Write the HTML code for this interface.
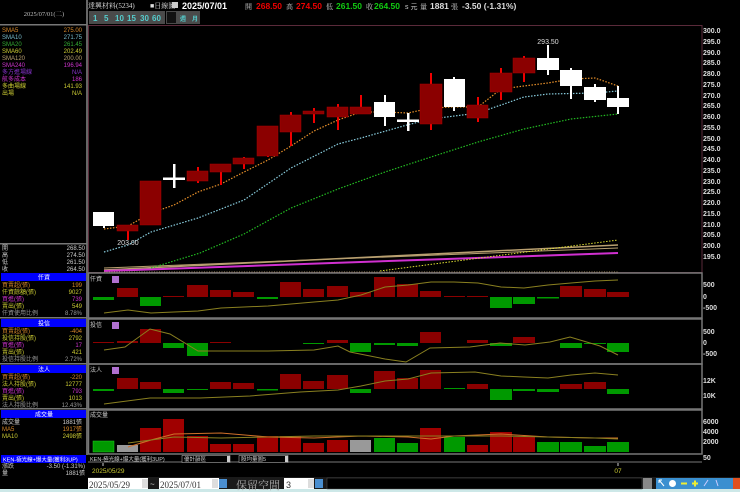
<!DOCTYPE html>
<html><head><meta charset="utf-8"><style>
html,body{margin:0;padding:0;background:#000;width:740px;height:492px;overflow:hidden}
svg{display:block}
text{font-family:"Liberation Sans","Noto Sans CJK TC",sans-serif}
.s{font-family:"Liberation Serif","Noto Serif CJK SC",serif}
</style></head><body>
<svg width="740" height="492" viewBox="0 0 740 492" xmlns="http://www.w3.org/2000/svg">
<rect width="740" height="492" fill="#000"/>
<text x="88" y="8" font-size="7" fill="#ddd" class="s">達興材料(5234)</text>
<text x="150" y="8" font-size="7" fill="#ddd" class="s">■日線圖</text>
<rect x="172" y="2" width="6" height="6" fill="#ccc"/>
<text x="182" y="9" font-size="9" font-weight="bold" fill="#fff">2025/07/01</text>
<text x="245" y="9" font-size="7" fill="#ccc" class="s">開</text><text x="256" y="9" font-size="8.5" font-weight="bold" fill="#e00">268.50</text>
<text x="286" y="9" font-size="7" fill="#ccc" class="s">高</text><text x="296" y="9" font-size="8.5" font-weight="bold" fill="#e00">274.50</text>
<text x="326" y="9" font-size="7" fill="#ccc" class="s">低</text><text x="336" y="9" font-size="8.5" font-weight="bold" fill="#1c1">261.50</text>
<text x="366" y="9" font-size="7" fill="#ccc" class="s">收</text><text x="374" y="9" font-size="8.5" font-weight="bold" fill="#1c1">264.50</text>
<text x="405" y="9" font-size="7" fill="#ccc">s 元</text>
<text x="420" y="9" font-size="7" fill="#ccc" class="s">量</text><text x="430" y="9" font-size="8.5" font-weight="bold" fill="#ddd">1881</text>
<text x="451" y="9" font-size="7" fill="#ccc" class="s">張</text>
<text x="462" y="9" font-size="8.5" font-weight="bold" fill="#ddd">-3.50 (-1.31%)</text>
<g font-size="8" font-weight="bold" fill="#5cc">
<rect x="89" y="11" width="76" height="13" fill="#4a4a4a"/>
<rect x="166" y="11" width="34" height="13" fill="#4a4a4a"/>
<rect x="167" y="12" width="9" height="11" fill="#111"/>
<text x="93" y="21">1</text><text x="104" y="21">5</text><text x="115" y="21">10</text><text x="127" y="21">15</text><text x="140" y="21">30</text><text x="152" y="21">60</text>
<text x="180" y="21" font-size="6">週</text><text x="192" y="21" font-size="6">月</text>
</g>
<rect x="0" y="0" width="87" height="492" fill="#000"/>
<rect x="86" y="0" width="2" height="455" fill="#666"/>
<rect x="0" y="24" width="87" height="1.5" fill="#777"/>
<text x="44" y="16" font-size="6.5" fill="#bbb" text-anchor="middle" class="s">2025/07/01(二)</text>
<g font-size="6" class="s">
<text x="2" y="32" fill="#d8892a">SMA5</text><text x="82" y="32" fill="#d8892a" text-anchor="end">275.00</text>
<text x="2" y="39" fill="#7bc">SMA10</text><text x="82" y="39" fill="#7bc" text-anchor="end">271.75</text>
<text x="2" y="46" fill="#3a3">SMA20</text><text x="82" y="46" fill="#3a3" text-anchor="end">261.45</text>
<text x="2" y="53" fill="#cc3">SMA60</text><text x="82" y="53" fill="#cc3" text-anchor="end">202.49</text>
<text x="2" y="60" fill="#b9a070">SMA120</text><text x="82" y="60" fill="#b9a070" text-anchor="end">200.00</text>
<text x="2" y="67" fill="#c3c">SMA240</text><text x="82" y="67" fill="#c3c" text-anchor="end">196.94</text>
<text x="2" y="74" fill="#83c">多方進場線</text><text x="82" y="74" fill="#83c" text-anchor="end">N/A</text>
<text x="2" y="81" fill="#c3c">航多成本</text><text x="82" y="81" fill="#c3c" text-anchor="end">186</text>
<text x="2" y="88" fill="#cc3">多曲場線</text><text x="82" y="88" fill="#cc3" text-anchor="end">141.93</text>
<text x="2" y="95" fill="#cc3">出場</text><text x="82" y="95" fill="#cc3" text-anchor="end">N/A</text>
</g>
<rect x="0" y="243" width="87" height="1.5" fill="#777"/>
<g font-size="6" fill="#ccc" class="s">
<text x="2" y="250">開</text><text x="85" y="250" text-anchor="end">268.50</text>
<text x="2" y="257">高</text><text x="85" y="257" text-anchor="end">274.50</text>
<text x="2" y="264">低</text><text x="85" y="264" text-anchor="end">261.50</text>
<text x="2" y="271">收</text><text x="85" y="271" text-anchor="end">264.50</text>
</g>
<g font-size="6" class="s">
<rect x="1" y="273" width="85" height="8" fill="#00f"/><text x="44" y="279.5" fill="#fff" text-anchor="middle">仟資</text>
<text x="2" y="287" fill="#d8892a">買賣超(張)</text><text x="82" y="287" fill="#d8892a" text-anchor="end">199</text>
<text x="2" y="294" fill="#cc3">仟資餘額(張)</text><text x="82" y="294" fill="#cc3" text-anchor="end">9027</text>
<text x="2" y="301" fill="#c3c">買進(張)</text><text x="82" y="301" fill="#c3c" text-anchor="end">739</text>
<text x="2" y="308" fill="#cc3">賣出(張)</text><text x="82" y="308" fill="#cc3" text-anchor="end">549</text>
<text x="2" y="315" fill="#999">仟資使用比例</text><text x="82" y="315" fill="#999" text-anchor="end">8.78%</text>
<rect x="0" y="317" width="87" height="1.5" fill="#777"/>
<rect x="1" y="319" width="85" height="8" fill="#00f"/><text x="44" y="325.5" fill="#fff" text-anchor="middle">投信</text>
<text x="2" y="333" fill="#d8892a">買賣超(張)</text><text x="82" y="333" fill="#d8892a" text-anchor="end">-404</text>
<text x="2" y="340" fill="#cc3">投信持股(張)</text><text x="82" y="340" fill="#cc3" text-anchor="end">2792</text>
<text x="2" y="347" fill="#c3c">買進(張)</text><text x="82" y="347" fill="#c3c" text-anchor="end">17</text>
<text x="2" y="354" fill="#cc3">賣出(張)</text><text x="82" y="354" fill="#cc3" text-anchor="end">421</text>
<text x="2" y="361" fill="#999">投信持股比例</text><text x="82" y="361" fill="#999" text-anchor="end">2.72%</text>
<rect x="0" y="363" width="87" height="1.5" fill="#777"/>
<rect x="1" y="365" width="85" height="8" fill="#00f"/><text x="44" y="371.5" fill="#fff" text-anchor="middle">法人</text>
<text x="2" y="379" fill="#d8892a">買賣超(張)</text><text x="82" y="379" fill="#d8892a" text-anchor="end">-220</text>
<text x="2" y="386" fill="#cc3">法人持股(張)</text><text x="82" y="386" fill="#cc3" text-anchor="end">12777</text>
<text x="2" y="393" fill="#c3c">買進(張)</text><text x="82" y="393" fill="#c3c" text-anchor="end">793</text>
<text x="2" y="400" fill="#cc3">賣出(張)</text><text x="82" y="400" fill="#cc3" text-anchor="end">1013</text>
<text x="2" y="407" fill="#999">法人持股比例</text><text x="82" y="407" fill="#999" text-anchor="end">12.43%</text>
<rect x="0" y="408" width="87" height="1.5" fill="#777"/>
<rect x="1" y="410" width="85" height="8" fill="#00f"/><text x="44" y="416.5" fill="#fff" text-anchor="middle">成交量</text>
<text x="2" y="424" fill="#ccc">成交量</text><text x="82" y="424" fill="#ccc" text-anchor="end">1881張</text>
<text x="2" y="431" fill="#d8892a">MA5</text><text x="82" y="431" fill="#d8892a" text-anchor="end">1917張</text>
<text x="2" y="438" fill="#cc3">MA10</text><text x="82" y="438" fill="#cc3" text-anchor="end">2498張</text>
<rect x="1" y="455" width="85" height="8" fill="#00f"/><text x="3" y="461.5" fill="#fff" font-size="5.5">KEN-極光線+爆大量(獲利3UP)</text>
<text x="2" y="468" fill="#ccc">漲跌</text><text x="85" y="468" fill="#ccc" text-anchor="end">-3.50 (-1.31%)</text>
<text x="2" y="475" fill="#ccc">量</text><text x="85" y="475" fill="#ccc" text-anchor="end">1881張</text>
</g>
<rect x="88.5" y="25.5" width="613.5" height="247" fill="none" stroke="#5a2a3a"/>
<g font-size="7" font-weight="bold" fill="#ddd">
<text x="703" y="33">300.0</text><text x="703" y="44">295.0</text><text x="703" y="55">290.0</text><text x="703" y="65">285.0</text><text x="703" y="76">280.0</text><text x="703" y="87">275.0</text><text x="703" y="98">270.0</text><text x="703" y="108">265.0</text><text x="703" y="119">260.0</text><text x="703" y="130">255.0</text><text x="703" y="141">250.0</text><text x="703" y="151">245.0</text><text x="703" y="162">240.0</text><text x="703" y="173">235.0</text><text x="703" y="184">230.0</text><text x="703" y="194">225.0</text><text x="703" y="205">220.0</text><text x="703" y="216">215.0</text><text x="703" y="227">210.0</text><text x="703" y="237">205.0</text><text x="703" y="248">200.0</text><text x="703" y="259">195.0</text>
</g>
<polyline points="104,270 618,245" fill="none" stroke="#b9a070" stroke-width="1.5"/>
<polyline points="104,268 618,248" fill="none" stroke="#b9a070" stroke-width="1"/>
<polyline points="104,271 618,253" fill="none" stroke="#d030d0" stroke-width="2"/>
<polyline points="380,271 618,240" fill="none" stroke="#dd3" stroke-width="1" stroke-dasharray="1.5 1.5"/>
<line x1="104" y1="272" x2="618" y2="272" stroke="#aa9060" stroke-dasharray="1 1.5"/>
<polyline points="151,268 200,253 244,234 291,208 338,189 385,172 431,157 478,142 524,129 571,119 618,114" fill="none" stroke="#2b2" stroke-width="1.2" stroke-dasharray="1.5 1.5"/>
<polyline points="104,252 128,245 151,232 198,218 244,200 291,168 338,144 361,138 407,125 431,119 478,113 524,97 548,94 595,93 618,91" fill="none" stroke="#8cd" stroke-width="1.2" stroke-dasharray="1.5 1.5"/>
<polyline points="104,229 128,226 151,213 174,205 198,192 221,184 244,172 268,160 291,146 314,131 338,120 361,112 385,112 408,113 431,108 454,107 478,107 501,89 524,86 548,83 571,79 595,78 618,86" fill="none" stroke="#e8902a" stroke-width="1.2" stroke-dasharray="1.5 1.5"/>
<g>
<g fill="#f00000">
<rect x="127" y="225" width="2" height="15"/><rect x="150" y="181" width="2" height="44"/>
<rect x="197" y="167" width="2" height="16"/><rect x="220" y="164" width="2" height="21"/>
<rect x="243" y="157" width="2" height="12"/><rect x="267" y="126" width="2" height="31"/>
<rect x="290" y="112" width="2" height="34"/><rect x="313" y="108" width="2" height="15"/>
<rect x="337" y="104" width="2" height="26"/><rect x="360" y="95" width="2" height="19"/>
<rect x="430" y="73" width="2" height="57"/><rect x="477" y="97" width="2" height="25"/>
<rect x="500" y="68" width="2" height="32"/><rect x="523" y="56" width="2" height="26"/>
</g>
<g fill="#8b0000" stroke="#a00" stroke-width="0.5">
<rect x="117" y="225" width="21" height="6"/><rect x="140" y="181" width="21" height="44"/>
<rect x="187" y="171" width="21" height="10"/><rect x="210" y="164" width="21" height="8"/>
<rect x="233" y="158" width="21" height="6"/><rect x="257" y="126" width="21" height="30"/>
<rect x="280" y="115" width="21" height="17"/><rect x="303" y="111" width="21" height="3"/>
<rect x="327" y="107" width="21" height="10"/><rect x="350" y="107" width="21" height="7"/>
<rect x="420" y="84" width="22" height="40"/><rect x="467" y="105" width="21" height="13"/>
<rect x="490" y="73" width="22" height="19"/><rect x="513" y="58" width="22" height="15"/>
</g>
<g fill="#fff">
<rect x="103" y="212" width="2" height="16"/><rect x="93" y="212" width="21" height="14"/>
<rect x="173" y="164" width="2.5" height="24"/><rect x="163" y="177.5" width="22" height="2.5"/>
<rect x="384" y="95" width="2" height="31"/><rect x="374" y="102" width="21" height="15"/>
<rect x="407" y="113" width="2.5" height="18"/><rect x="397" y="119.5" width="22" height="2.5"/>
<rect x="453" y="77" width="2" height="34"/><rect x="444" y="79" width="21" height="28"/>
<rect x="547" y="45" width="2" height="30"/><rect x="537" y="58" width="22" height="12"/>
<rect x="570" y="68" width="2" height="31"/><rect x="560" y="70" width="22" height="16"/>
<rect x="594" y="84" width="2" height="18"/><rect x="584" y="87" width="22" height="13"/>
<rect x="617" y="86" width="2" height="28"/><rect x="607" y="98" width="22" height="9"/>
</g>
</g>
<text x="548" y="44" font-size="7" fill="#ddd" text-anchor="middle">293.50</text>
<text x="128" y="245" font-size="7" fill="#ddd" text-anchor="middle">203.00</text>
<g fill="none" stroke="#777" stroke-width="1.5">
<rect x="88.5" y="273" width="613.5" height="45"/>
<rect x="88.5" y="319" width="613.5" height="45"/>
<rect x="88.5" y="364" width="613.5" height="45"/>
<rect x="88.5" y="410" width="613.5" height="44"/>
</g>
<line x1="88" y1="462" x2="702" y2="462" stroke="#777"/>
<g font-size="6" fill="#ccc" class="s">
<text x="90" y="281">仟資</text><text x="90" y="327">投信</text><text x="90" y="372">法人</text><text x="90" y="417">成交量</text>
</g>
<g fill="#b070d0"><rect x="112" y="276" width="7" height="7"/><rect x="112" y="322" width="7" height="7"/><rect x="112" y="367" width="7" height="7"/></g>
<g font-size="7" font-weight="bold" fill="#ddd">
<text x="703" y="287">500</text><text x="703" y="299">0</text><text x="703" y="310">-500</text>
<text x="703" y="334">500</text><text x="703" y="345">0</text><text x="703" y="356">-500</text>
<text x="703" y="383">12K</text><text x="703" y="398">10K</text>
<text x="703" y="424">6000</text><text x="703" y="434">4000</text><text x="703" y="444">2000</text><text x="703" y="460">50</text>
</g>
<g>
<rect x="93" y="297" width="21" height="3" fill="#090"/>
<rect x="117" y="288" width="21" height="9" fill="#8b0000"/>
<rect x="140" y="297" width="21" height="9" fill="#090"/>
<rect x="163" y="296" width="21" height="1" fill="#8b0000"/>
<rect x="187" y="285" width="21" height="12" fill="#8b0000"/>
<rect x="210" y="290" width="21" height="7" fill="#8b0000"/>
<rect x="233" y="292" width="21" height="5" fill="#8b0000"/>
<rect x="257" y="297" width="21" height="2" fill="#090"/>
<rect x="280" y="282" width="21" height="15" fill="#8b0000"/>
<rect x="303" y="289" width="21" height="8" fill="#8b0000"/>
<rect x="327" y="286" width="21" height="11" fill="#8b0000"/>
<rect x="350" y="292" width="21" height="5" fill="#8b0000"/>
<rect x="374" y="277" width="21" height="20" fill="#8b0000"/>
<rect x="397" y="284" width="21" height="13" fill="#8b0000"/>
<rect x="420" y="291" width="21" height="6" fill="#8b0000"/>
<rect x="444" y="296" width="21" height="1" fill="#8b0000"/>
<rect x="467" y="296" width="21" height="1" fill="#8b0000"/>
<rect x="490" y="297" width="22" height="11" fill="#090"/>
<rect x="513" y="297" width="22" height="7" fill="#090"/>
<rect x="537" y="297" width="22" height="1.5" fill="#090"/>
<rect x="560" y="286" width="22" height="11" fill="#8b0000"/>
<rect x="584" y="289" width="22" height="8" fill="#8b0000"/>
<rect x="607" y="292" width="22" height="5" fill="#8b0000"/>
</g>
<polyline points="104,313 128,310 151,313 174,312 198,311 221,308 244,307 268,306 291,304 314,302 338,300 361,295 385,287 408,285 431,282 454,282 478,283 501,287 524,288 548,285 571,283 595,281 618,280" fill="none" stroke="#8a8020" stroke-width="1"/>
<g>
<rect x="93" y="342" width="21" height="1" fill="#8b0000"/>
<rect x="117" y="341" width="21" height="2" fill="#8b0000"/>
<rect x="140" y="329" width="21" height="14" fill="#8b0000"/>
<rect x="163" y="343" width="21" height="5" fill="#090"/>
<rect x="187" y="343" width="21" height="13" fill="#090"/>
<rect x="210" y="342" width="21" height="1" fill="#8b0000"/>
<rect x="303" y="343" width="21" height="1" fill="#090"/>
<rect x="327" y="340" width="21" height="3" fill="#8b0000"/>
<rect x="350" y="343" width="21" height="9" fill="#090"/>
<rect x="374" y="343" width="21" height="2" fill="#090"/>
<rect x="397" y="343" width="21" height="3" fill="#090"/>
<rect x="420" y="332" width="21" height="11" fill="#8b0000"/>
<rect x="467" y="340" width="21" height="3" fill="#8b0000"/>
<rect x="490" y="343" width="22" height="3" fill="#090"/>
<rect x="513" y="337" width="22" height="6" fill="#8b0000"/>
<rect x="560" y="343" width="22" height="5" fill="#090"/>
<rect x="584" y="343" width="22" height="1" fill="#090"/>
<rect x="607" y="343" width="22" height="9" fill="#090"/>
</g>
<polyline points="104,350 125,347 150,329 170,334 198,351 221,351 268,351 314,350 338,346 350,352 385,359 406,362 430,348 470,347 500,343 525,345 550,342 570,337 600,346 618,355" fill="none" stroke="#8a8020" stroke-width="1"/>
<g>
<rect x="93" y="389" width="21" height="2" fill="#090"/>
<rect x="117" y="378" width="21" height="11" fill="#8b0000"/>
<rect x="140" y="382" width="21" height="7" fill="#8b0000"/>
<rect x="163" y="389" width="21" height="4" fill="#090"/>
<rect x="187" y="389" width="21" height="1" fill="#090"/>
<rect x="210" y="382" width="21" height="7" fill="#8b0000"/>
<rect x="233" y="383" width="21" height="6" fill="#8b0000"/>
<rect x="257" y="389" width="21" height="1.5" fill="#090"/>
<rect x="280" y="374" width="21" height="15" fill="#8b0000"/>
<rect x="303" y="381" width="21" height="8" fill="#8b0000"/>
<rect x="327" y="375" width="21" height="14" fill="#8b0000"/>
<rect x="350" y="389" width="21" height="4" fill="#090"/>
<rect x="374" y="371" width="21" height="18" fill="#8b0000"/>
<rect x="397" y="378" width="21" height="11" fill="#8b0000"/>
<rect x="420" y="370" width="21" height="19" fill="#8b0000"/>
<rect x="444" y="388" width="21" height="1" fill="#090"/>
<rect x="467" y="384" width="21" height="5" fill="#8b0000"/>
<rect x="490" y="389" width="22" height="11" fill="#090"/>
<rect x="513" y="389" width="22" height="2" fill="#090"/>
<rect x="537" y="389" width="22" height="3" fill="#090"/>
<rect x="560" y="384" width="22" height="5" fill="#8b0000"/>
<rect x="584" y="382" width="22" height="7" fill="#8b0000"/>
<rect x="607" y="389" width="22" height="5" fill="#090"/>
</g>
<polyline points="104,404 150,398 200,398 250,396 300,392 338,390 361,386 385,381 408,379 431,373 475,372 501,376 524,377 548,378 571,375 595,373 618,375" fill="none" stroke="#8a8020" stroke-width="1"/>
<g>
<rect x="93" y="441" width="21" height="11" fill="#090" stroke="#2c2" stroke-width="0.5"/>
<rect x="117" y="445" width="21" height="7" fill="#999"/>
<rect x="140" y="428" width="21" height="24" fill="#a00000"/>
<rect x="163" y="419" width="21" height="33" fill="#a00000"/>
<rect x="187" y="436" width="21" height="16" fill="#a00000"/>
<rect x="210" y="444" width="21" height="8" fill="#a00000"/>
<rect x="233" y="444" width="21" height="8" fill="#a00000"/>
<rect x="257" y="436" width="21" height="16" fill="#a00000"/>
<rect x="280" y="436" width="21" height="16" fill="#a00000"/>
<rect x="303" y="443" width="21" height="9" fill="#a00000"/>
<rect x="327" y="440" width="21" height="12" fill="#a00000"/>
<rect x="350" y="440" width="21" height="12" fill="#999"/>
<rect x="374" y="438" width="21" height="14" fill="#090"/>
<rect x="397" y="443" width="21" height="9" fill="#090"/>
<rect x="420" y="428" width="21" height="24" fill="#a00000"/>
<rect x="444" y="437" width="21" height="15" fill="#090"/>
<rect x="467" y="445" width="21" height="7" fill="#a00000"/>
<rect x="490" y="432" width="22" height="20" fill="#a00000"/>
<rect x="513" y="437" width="22" height="15" fill="#a00000"/>
<rect x="537" y="442" width="22" height="10" fill="#090"/>
<rect x="560" y="442" width="22" height="10" fill="#090"/>
<rect x="584" y="446" width="22" height="6" fill="#090"/>
<rect x="607" y="442" width="22" height="10" fill="#090"/>
</g>
<polyline points="128,447 151,440 174,434 221,433 268,437 314,438 361,436 408,437 431,439 454,436 501,434 548,437 595,438 618,438" fill="none" stroke="#d0702a" stroke-width="1"/>
<polyline points="128,443 174,437 221,438 268,437 314,436 361,436 408,436 454,436 501,436 548,437 595,438 618,439" fill="none" stroke="#8a8020" stroke-width="1"/>
<g font-size="5.5" fill="#ccc" class="s">
<text x="90" y="461">KEN-極光線+爆大量(獲利3UP)</text>
<rect x="182" y="455.5" width="48" height="7" fill="#000" stroke="#ccc" stroke-width="0.5"/><text x="184" y="461">優計韻區</text><rect x="227" y="456" width="3" height="6" fill="#ccc"/>
<rect x="239" y="455.5" width="49" height="7" fill="#000" stroke="#ccc" stroke-width="0.5"/><text x="241" y="461">股均量圖5</text><rect x="285" y="456" width="3" height="6" fill="#ccc"/>
</g>
<text x="92" y="473" font-size="6.5" fill="#cc3">2025/05/29</text>
<line x1="103" y1="463" x2="103" y2="466" stroke="#ccc"/>
<text x="618" y="473" font-size="6.5" fill="#cc3" text-anchor="middle">07</text>
<line x1="618" y1="463" x2="618" y2="466" stroke="#ccc"/>
<rect x="88" y="477" width="652" height="15" fill="#1a1a1a"/>
<rect x="0" y="489" width="740" height="3" fill="#cde8e8"/>
<rect x="88" y="478" width="60" height="11" fill="#fff"/>
<text x="89" y="488" font-size="9" fill="#333" class="s">2025/05/29</text>
<rect x="142" y="479" width="6" height="9" fill="#ddd"/>
<text x="150" y="487" font-size="8" fill="#ccc">~</text>
<rect x="159" y="478" width="60" height="11" fill="#fff"/>
<text x="160" y="488" font-size="9" fill="#333" class="s">2025/07/01</text>
<rect x="212" y="479" width="6" height="9" fill="#ddd"/>
<rect x="219" y="479" width="8" height="9" fill="#4a8fd0"/>
<text x="236" y="489" font-size="11" fill="#aaa" class="s">保留空間</text>
<rect x="284" y="478" width="30" height="11" fill="#fff"/>
<text x="286" y="488" font-size="9" fill="#333">3</text>
<rect x="308" y="479" width="6" height="9" fill="#ddd"/>
<rect x="315" y="479" width="8" height="9" fill="#4a8fd0"/>
<rect x="327" y="478" width="315" height="11" fill="#000" stroke="#555" stroke-width="0.5"/>
<rect x="643" y="478" width="9" height="11" fill="#888"/>
<g fill="#3a8fd0">
<rect x="656" y="478" width="11" height="11"/><rect x="667" y="478" width="11" height="11"/><rect x="678" y="478" width="11" height="11"/><rect x="689" y="478" width="11" height="11"/><rect x="700" y="478" width="11" height="11"/><rect x="711" y="478" width="11" height="11"/><rect x="722" y="478" width="11" height="11"/>
</g>
<rect x="733" y="478" width="7" height="11" fill="#e05020"/>
<circle cx="672.5" cy="483.5" r="3.5" fill="#fff"/>
<rect x="681" y="482.5" width="6" height="2" fill="#ee3"/>
<rect x="692" y="482.5" width="6" height="2" fill="#ee3"/><rect x="694" y="480.5" width="2" height="6" fill="#ee3"/>
<path d="M659 480 L664 486 M659 480 L659 483 M659 480 L662 480" stroke="#fff" fill="none"/>
<path d="M704 486 L708 480" stroke="#ccf"/>
<path d="M716 480 L718 486" stroke="#ccf"/>
</svg>
</body></html>
